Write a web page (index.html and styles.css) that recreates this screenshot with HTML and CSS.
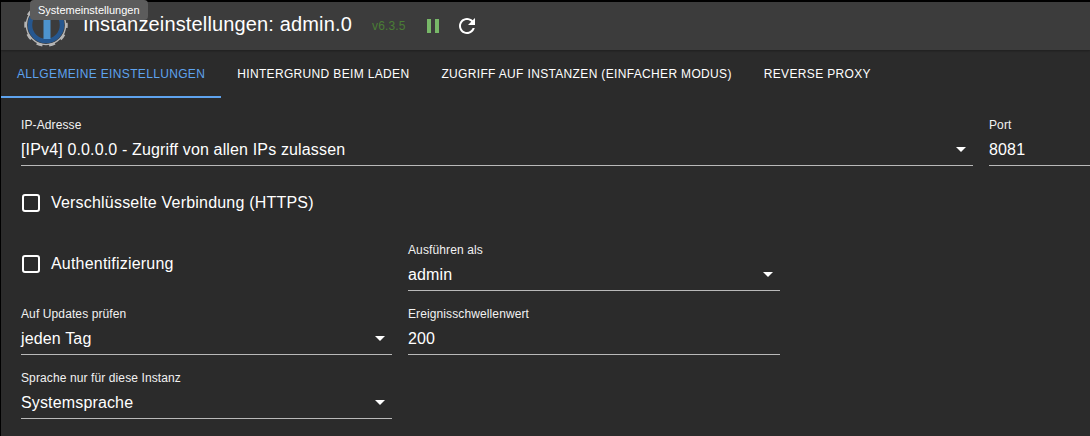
FILE: index.html
```html
<!DOCTYPE html>
<html lang="de">
<head>
<meta charset="utf-8">
<title>Instanzeinstellungen</title>
<link rel="stylesheet" href="styles.css">
</head>
<body>
<div class="app">
  <header class="toolbar">
    <svg class="logo" viewBox="0 0 48 48" width="48" height="48">
      <circle cx="24" cy="23" r="20.5" fill="none" stroke="#b5b5b5" stroke-width="2.5" stroke-dasharray="6 6.88" stroke-dashoffset="3"/>
      <circle cx="24" cy="23" r="19.6" fill="none" stroke="#b5b5b5" stroke-width="1.4"/>
      <circle cx="24" cy="23" r="16" fill="none" stroke="#26578f" stroke-width="4.5"/>
      <rect x="21.5" y="2" width="7" height="35" fill="#4d94cf"/>
    </svg>
    <h1 class="title">Instanzeinstellungen: admin.0</h1>
    <span class="version">v6.3.5</span>
    <span class="pause"><i></i><i></i></span>
    <svg class="reload" viewBox="0 0 24 24" width="24" height="24"><path fill="#fff" d="M17.65 6.35C16.2 4.9 14.21 4 12 4c-4.42 0-7.99 3.58-7.99 8s3.57 8 7.99 8c3.73 0 6.84-2.55 7.73-6h-2.08c-.82 2.33-3.04 4-5.65 4-3.31 0-6-2.69-6-6s2.69-6 6-6c1.66 0 3.14.69 4.22 1.78L13 11h7V4l-2.35 2.35z"/></svg>
  </header>
  <div class="tooltip">Systemeinstellungen</div>
  <nav class="tabs">
    <a class="tab active">Allgemeine Einstellungen</a>
    <a class="tab">Hintergrund beim Laden</a>
    <a class="tab">Zugriff auf Instanzen (einfacher Modus)</a>
    <a class="tab">Reverse Proxy</a>
  </nav>
  <main class="form">
    <div class="row-ip">
      <div class="field grow"><label>IP-Adresse</label><div class="value select">[IPv4] 0.0.0.0 - Zugriff von allen IPs zulassen</div></div>
      <div class="field port"><label>Port</label><div class="value">8081</div></div>
    </div>
    <div class="check check-https"><span class="box"></span>Verschlüsselte Verbindung (HTTPS)</div>
    <div class="grid">
      <div class="check check-auth"><span class="box"></span>Authentifizierung</div>
      <div class="field"><label>Ausführen als</label><div class="value select">admin</div></div>
      <div class="field"><label>Auf Updates prüfen</label><div class="value select">jeden Tag</div></div>
      <div class="field"><label>Ereignisschwellenwert</label><div class="value">200</div></div>
      <div class="field"><label>Sprache nur für diese Instanz</label><div class="value select">Systemsprache</div></div>
    </div>
  </main>
</div>
</body>
</html>
```
FILE: styles.css
```css
* { box-sizing: border-box; }
html, body { margin: 0; height: 100%; overflow: hidden; }
body { background: #000; font-family: "Liberation Sans", Arial, sans-serif; color: #fff; }
.app { position: relative; margin: 2px 0 0 1px; height: 434px; background: #2b2b2b; }
.toolbar { height: 48px; background: #3c3c3c; display: flex; align-items: center; padding-left: 21px; box-shadow: 0 1px 2px rgba(0,0,0,.3); }
.logo { flex: none; }
.title { margin: 0 0 4px 13px; font-size: 20px; font-weight: 400; line-height: 24px; letter-spacing: .15px; white-space: nowrap; }
.version { margin-left: 20px; font-size: 12px; letter-spacing: .15px; color: #4a7d35; }
.pause { display: flex; gap: 4px; margin-left: 21px; }
.pause i { width: 4px; height: 14px; background: #78b868; }
.reload { margin-left: 16px; }
.tooltip { position: absolute; left: 29px; top: -2px; height: 20px; padding: 0 8px; border-radius: 4px; background: #5c5c5c; font-size: 11px; line-height: 20px; }
.tabs { display: flex; height: 48px; }
.tab { padding: 0 16px; line-height: 48px; font-size: 12px; letter-spacing: .34px; text-transform: uppercase; white-space: nowrap; }
.tab.active { color: #5ea3ee; border-bottom: 2px solid #5ea3ee; }
.form { padding: 19px 0 0 20px; }
.row-ip { display: flex; gap: 16px; }
.grow { flex: 1; }
.port { width: 101px; }
.field { padding-top: 1px; }
label { display: block; font-size: 12px; line-height: 14px; letter-spacing: .11px; color: #f2f2f2; }
.value { position: relative; height: 34px; padding-top: 8px; font-size: 16px; line-height: 20px; letter-spacing: .15px; border-bottom: 1px solid #b9b9b9; }
.select::after { content: ""; position: absolute; right: 7px; top: 15px; border: 5px solid transparent; border-top-color: #fff; border-bottom: 0; }
.check { display: flex; align-items: center; font-size: 16px; letter-spacing: .2px; gap: 11px; padding-left: 1px; }
.box { width: 18px; height: 18px; border: 2px solid #fff; border-radius: 3px; }
.check-https { height: 20px; margin-top: 27px; }
.check-auth { padding-bottom: 5px; }
.grid { display: grid; grid-template-columns: 371px 372px; column-gap: 16px; row-gap: 15px; margin-top: 29px; }
```
